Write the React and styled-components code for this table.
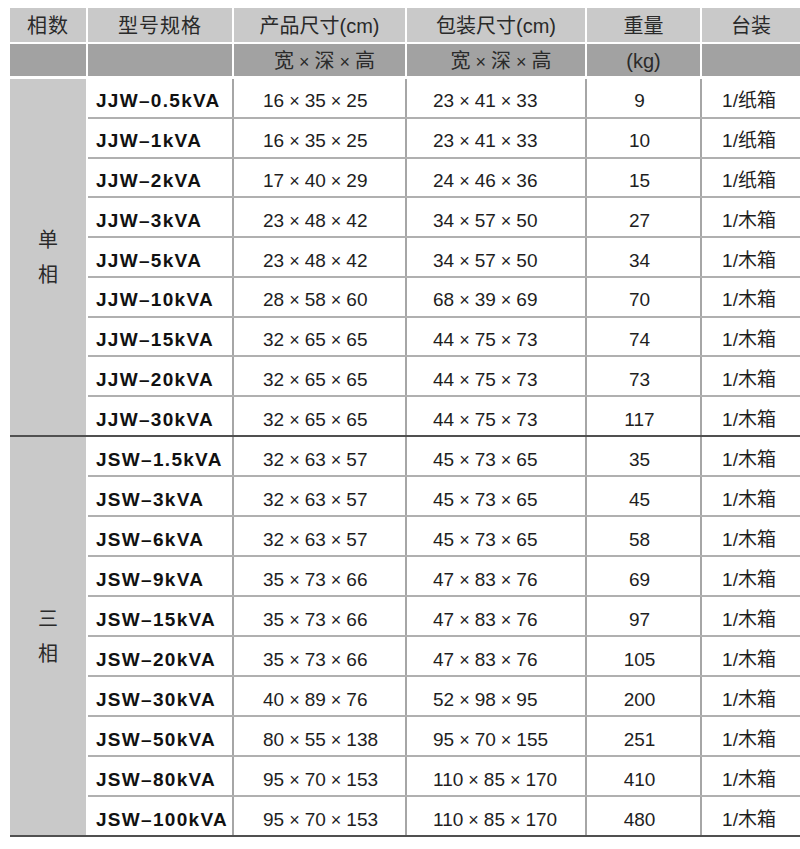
import React from "react";
import styled, { createGlobalStyle } from "styled-components";

const GlobalStyle = createGlobalStyle`
  html, body {
    margin: 0;
    padding: 0;
    background: #ffffff;
  }
  body {
    font-family: "Liberation Sans", "Noto Sans CJK SC", sans-serif;
  }
`;

const COLS = "144px 171px 178px 113px 1fr";

const Page = styled.div`
  width: 800px;
  height: 849px;
  padding: 8px 0 0 10px;
  box-sizing: border-box;
  overflow: hidden;
`;

const HeadRow = styled.div`
  display: grid;
  grid-template-columns: 76px ${COLS};
  column-gap: 2px;
  height: ${(p) => p.h}px;
  margin-bottom: ${(p) => p.mb}px;
`;

const HeadCell = styled.div`
  background: ${(p) => (p.dark ? "#a2a2a2" : "#c9c9c9")};
  color: #2a2a2a;
  font-family: "Liberation Sans", "Noto Sans CJK SC", sans-serif;
  font-size: 20px;
  line-height: 1;
  display: flex;
  align-items: center;
  justify-content: center;
  padding-top: 1px;
  padding-left: ${(p) => p.pl || 0}px;
  letter-spacing: ${(p) => (p.wide ? "1px" : "0")};
`;

const Group = styled.div`
  display: grid;
  grid-template-columns: 76px 1fr;
  column-gap: 2px;
  height: ${(p) => p.h}px;
`;

const PhaseCell = styled.div`
  background: #c9c9c9;
  display: flex;
  flex-direction: column;
  align-items: center;
  justify-content: center;
  gap: 6px;
  font-family: "Noto Sans CJK SC", sans-serif;
  font-size: 20px;
  color: #2a2a2a;
  padding-bottom: 2px;
`;

const Rows = styled.div`
  display: flex;
  flex-direction: column;
`;

const Row = styled.div`
  flex: 1;
  display: grid;
  grid-template-columns: ${COLS};
  column-gap: 2px;
  background: #a6a6a6;
  border-top: ${(p) => (p.first ? "none" : "2px solid #b0b0b0")};
`;

const Cell = styled.div`
  background: #ffffff;
  display: flex;
  align-items: center;
  justify-content: ${(p) => p.align || "center"};
  padding-left: ${(p) => p.pl || 0}px;
  padding-right: ${(p) => p.pr || 0}px;
  padding-top: 6px;
  font-family: "Liberation Sans", "Noto Sans CJK SC", sans-serif;
  font-size: 19px;
  line-height: 1;
  color: #1e1e1e;
  white-space: nowrap;
`;

const Model = styled(Cell)`
  font-weight: bold;
  letter-spacing: 1.3px;
  color: #111111;
  padding-left: 8px;
`;

const Times = styled.span`
  font-size: 18px;
  margin: 0 ${(p) => (p.head ? 5 : 5)}px;
`;

const Rule = styled.div`
  height: 2px;
  background: #505050;
`;

const single = [
  ["JJW–0.5kVA", "16 35 25", "23 41 33", "9", "1/纸箱"],
  ["JJW–1kVA", "16 35 25", "23 41 33", "10", "1/纸箱"],
  ["JJW–2kVA", "17 40 29", "24 46 36", "15", "1/纸箱"],
  ["JJW–3kVA", "23 48 42", "34 57 50", "27", "1/木箱"],
  ["JJW–5kVA", "23 48 42", "34 57 50", "34", "1/木箱"],
  ["JJW–10kVA", "28 58 60", "68 39 69", "70", "1/木箱"],
  ["JJW–15kVA", "32 65 65", "44 75 73", "74", "1/木箱"],
  ["JJW–20kVA", "32 65 65", "44 75 73", "73", "1/木箱"],
  ["JJW–30kVA", "32 65 65", "44 75 73", "117", "1/木箱"],
];

const three = [
  ["JSW–1.5kVA", "32 63 57", "45 73 65", "35", "1/木箱"],
  ["JSW–3kVA", "32 63 57", "45 73 65", "45", "1/木箱"],
  ["JSW–6kVA", "32 63 57", "45 73 65", "58", "1/木箱"],
  ["JSW–9kVA", "35 73 66", "47 83 76", "69", "1/木箱"],
  ["JSW–15kVA", "35 73 66", "47 83 76", "97", "1/木箱"],
  ["JSW–20kVA", "35 73 66", "47 83 76", "105", "1/木箱"],
  ["JSW–30kVA", "40 89 76", "52 98 95", "200", "1/木箱"],
  ["JSW–50kVA", "80 55 138", "95 70 155", "251", "1/木箱"],
  ["JSW–80kVA", "95 70 153", "110 85 170", "410", "1/木箱"],
  ["JSW–100kVA", "95 70 153", "110 85 170", "480", "1/木箱"],
];

const Dims = ({ value }) => {
  const parts = value.split(" ");
  return (
    <span>
      {parts.map((p, i) => (
        <React.Fragment key={i}>
          {i > 0 && <Times>×</Times>}
          {p}
        </React.Fragment>
      ))}
    </span>
  );
};

const PhaseGroup = ({ label, rows, h }) => (
  <Group h={h}>
    <PhaseCell>
      <span>{label[0]}</span>
      <span>{label[1]}</span>
    </PhaseCell>
    <Rows>
      {rows.map((r, i) => (
        <Row key={r[0]} first={i === 0}>
          <Model align="flex-start">{r[0]}</Model>
          <Cell align="flex-start" pl={29}>
            <Dims value={r[1]} />
          </Cell>
          <Cell align="flex-start" pl={26}>
            <Dims value={r[2]} />
          </Cell>
          <Cell pr={8}>{r[3]}</Cell>
          <Cell pr={4}>{r[4]}</Cell>
        </Row>
      ))}
    </Rows>
  </Group>
);

export default function App() {
  return (
    <Page>
      <GlobalStyle />
      <HeadRow h={34} mb={2}>
        <HeadCell wide>相数</HeadCell>
        <HeadCell wide>型号规格</HeadCell>
        <HeadCell>产品尺寸(cm)</HeadCell>
        <HeadCell>包装尺寸(cm)</HeadCell>
        <HeadCell>重量</HeadCell>
        <HeadCell>台装</HeadCell>
      </HeadRow>
      <HeadRow h={32} mb={3}>
        <HeadCell dark />
        <HeadCell dark />
        <HeadCell dark pl={10}>
          <span>宽<Times head>×</Times>深<Times head>×</Times>高</span>
        </HeadCell>
        <HeadCell dark pl={10}>
          <span>宽<Times head>×</Times>深<Times head>×</Times>高</span>
        </HeadCell>
        <HeadCell dark>(kg)</HeadCell>
        <HeadCell dark />
      </HeadRow>
      <PhaseGroup label="单相" rows={single} h={356} />
      <Rule />
      <PhaseGroup label="三相" rows={three} h={398} />
      <Rule />
    </Page>
  );
}
